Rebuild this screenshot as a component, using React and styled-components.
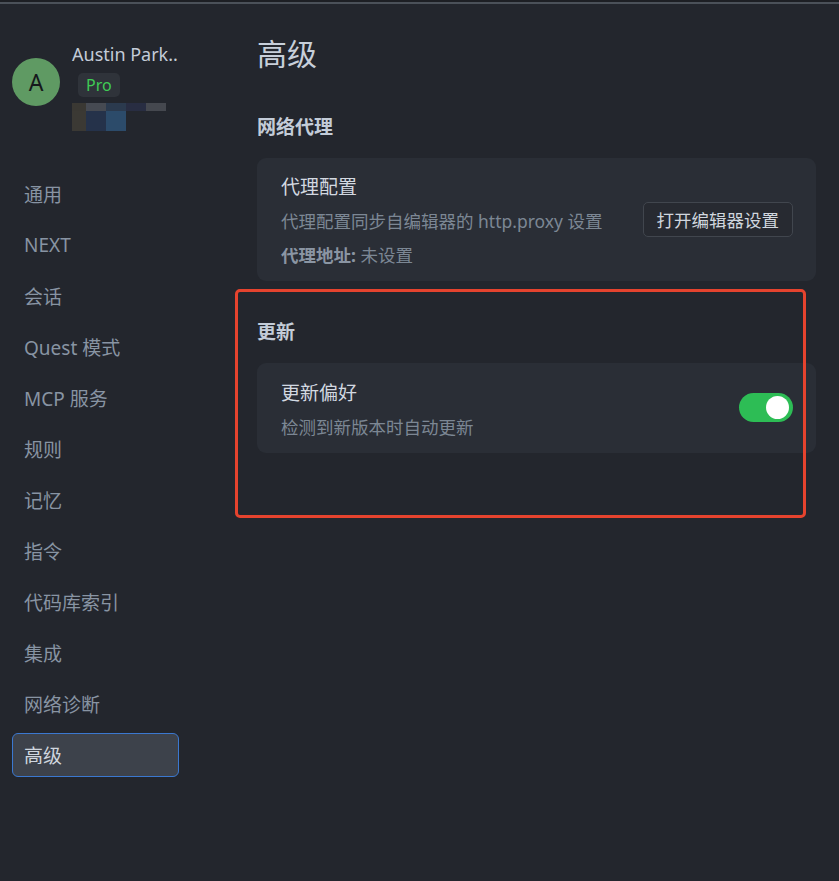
import React from "react";
import styled, { createGlobalStyle } from "styled-components";

const Global = createGlobalStyle`
  html, body { margin: 0; padding: 0; background: #23262d; }
  body { font-family: "Noto Sans", "Noto Sans CJK SC", sans-serif; }
  * { box-sizing: border-box; }
`;

const Page = styled.div`
  min-height: 881px;
  background: #23262d;
  border-top: 2px solid #1d1f24;
`;

const TopLine = styled.div`
  height: 2px;
  background: #4b5159;
`;

const Layout = styled.div`
  display: flex;
`;

const Sidebar = styled.aside`
  width: 257px;
  flex-shrink: 0;
  padding: 38px 0 0 12px;
`;

const Profile = styled.div`
  display: flex;
  align-items: flex-start;
  gap: 12px;
`;

const Avatar = styled.div`
  width: 48px;
  height: 48px;
  margin-top: 16px;
  border-radius: 50%;
  background: #5f9a63;
  color: #15181c;
  font-size: 23px;
  display: flex;
  align-items: center;
  justify-content: center;
`;

const Info = styled.div`
  display: flex;
  flex-direction: column;
  align-items: flex-start;
`;

const Name = styled.div`
  font-size: 18px;
  line-height: 24px;
  color: #c3ccd8;
`;

const Badge = styled.span`
  margin: 7px 0 0 6px;
  height: 24px;
  padding: 0 8px;
  border-radius: 5px;
  background: #2f333a;
  color: #3fcb55;
  font-size: 16px;
  line-height: 24px;
`;

const Mosaic = styled.div`
  margin-top: 6px;
  display: grid;
  grid-template-columns: 14px 20px 20px 20px 20px;
  grid-template-rows: 8px 20px;
`;

const Cell = styled.div`
  background: ${(p) => p.$c};
`;

const Nav = styled.nav`
  margin-top: 41px;
  display: flex;
  flex-direction: column;
  gap: 7px;
`;

const NavItem = styled.div`
  width: 167px;
  height: 44px;
  padding-left: 11px;
  display: flex;
  align-items: center;
  font-size: 19px;
  border-radius: 6px;
  border: 1px solid ${(p) => (p.$active ? "#3b78d0" : "transparent")};
  background: ${(p) => (p.$active ? "#3d424b" : "transparent")};
  color: ${(p) => (p.$active ? "#cfd6df" : "#8894a3")};
`;

const Main = styled.main`
  flex: 1;
  padding: 30px 23px 0 0;
`;

const Title = styled.h1`
  margin: 0;
  font-size: 30px;
  line-height: 40px;
  font-weight: 400;
  color: #c7cfda;
`;

const Section = styled.section`
  position: relative;
  margin-top: ${(p) => p.$top}px;
  ${(p) =>
    p.$highlight &&
    `
    &::after {
      content: "";
      position: absolute;
      left: -22px;
      top: -29px;
      right: 10px;
      bottom: -65px;
      border: 3px solid #e5432e;
      border-radius: 5px;
      pointer-events: none;
    }
  `}
`;

const Heading = styled.h2`
  margin: 0 0 17px;
  font-size: 19px;
  line-height: 28px;
  font-weight: 700;
  color: #c3ccd8;
`;

const Card = styled.div`
  background: #2a2e36;
  border-radius: 9px;
  padding: ${(p) => (p.$tight ? "14px 23px 11px 24px" : "15px 23px 11px 24px")};
  display: flex;
  align-items: center;
  justify-content: space-between;
`;

const Texts = styled.div`
  display: flex;
  flex-direction: column;
  gap: 4px;
`;

const CardTitle = styled.div`
  font-size: 19px;
  line-height: 30px;
  color: #d3d9e1;
`;

const Desc = styled.div`
  font-size: 17.5px;
  line-height: 30px;
  color: #7c8794;
`;

const Label = styled.span`
  font-weight: 700;
  color: #8a95a3;
`;

const Button = styled.button`
  height: 35px;
  padding: 0 13px;
  margin-bottom: 3px;
  border: 1px solid #41464e;
  border-radius: 5px;
  background: #272a31;
  color: #d0d6de;
  font-family: inherit;
  font-size: 17.5px;
`;

const Toggle = styled.div`
  width: 54px;
  height: 29px;
  border-radius: 15px;
  background: #2dbd55;
  display: flex;
  align-items: center;
  justify-content: ${(p) => (p.$on ? "flex-end" : "flex-start")};
  padding: 0 4px;
  margin-bottom: 6px;
`;

const Knob = styled.div`
  width: 23px;
  height: 23px;
  border-radius: 50%;
  background: #ffffff;
`;

const navItems = [
  "通用",
  "NEXT",
  "会话",
  "Quest 模式",
  "MCP 服务",
  "规则",
  "记忆",
  "指令",
  "代码库索引",
  "集成",
  "网络诊断",
  "高级",
];

const mosaic = [
  "#3a3833", "#464a52", "#2b3a4e", "#282d42", "#45484f",
  "#3b3934", "#25324a", "#2c4b6a", "transparent", "transparent",
];

export default function App() {
  return (
    <Page>
      <Global />
      <TopLine />
      <Layout>
        <Sidebar>
          <Profile>
            <Avatar>A</Avatar>
            <Info>
              <Name>Austin Park..</Name>
              <Badge>Pro</Badge>
              <Mosaic>
                {mosaic.map((c, i) => (
                  <Cell key={i} $c={c} />
                ))}
              </Mosaic>
            </Info>
          </Profile>
          <Nav>
            {navItems.map((n) => (
              <NavItem key={n} $active={n === "高级"}>
                {n}
              </NavItem>
            ))}
          </Nav>
        </Sidebar>
        <Main>
          <Title>高级</Title>
          <Section $top={39}>
            <Heading>网络代理</Heading>
            <Card $tight>
              <Texts>
                <CardTitle>代理配置</CardTitle>
                <Desc>代理配置同步自编辑器的 http.proxy 设置</Desc>
                <Desc>
                  <Label>代理地址:</Label> 未设置
                </Desc>
              </Texts>
              <Button>打开编辑器设置</Button>
            </Card>
          </Section>
          <Section $top={37} $highlight>
            <Heading>更新</Heading>
            <Card>
              <Texts>
                <CardTitle>更新偏好</CardTitle>
                <Desc>检测到新版本时自动更新</Desc>
              </Texts>
              <Toggle $on>
                <Knob />
              </Toggle>
            </Card>
          </Section>
        </Main>
      </Layout>
    </Page>
  );
}
